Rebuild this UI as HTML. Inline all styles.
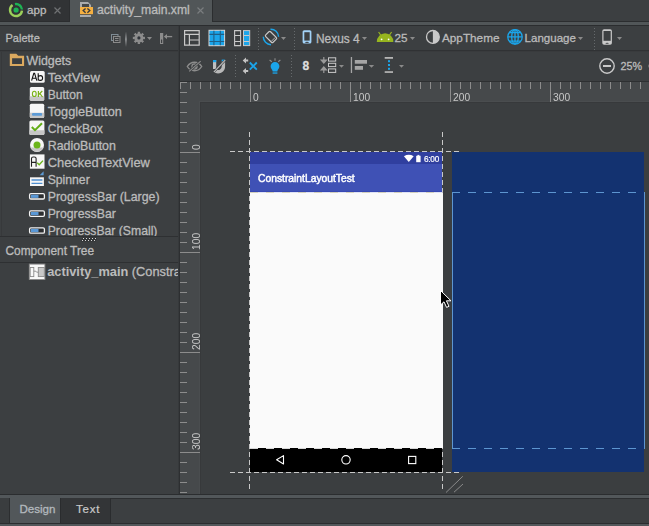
<!DOCTYPE html><html><head><meta charset="utf-8"><style>
*{margin:0;padding:0;box-sizing:border-box}
html,body{width:649px;height:526px;overflow:hidden;background:#3c3f41;font-family:"Liberation Sans",sans-serif;color:#bbbbbb}
.a{position:absolute}
.t{position:absolute;white-space:nowrap;line-height:1;-webkit-text-stroke:0.3px currentColor}
svg{position:absolute;overflow:visible}
</style></head><body><div class="a" style="left:0px;top:0px;width:649px;height:22px;background:#3c3f41;"></div>
<div class="a" style="left:0px;top:0px;width:70px;height:22px;background:#313335;"></div>
<div class="a" style="left:69px;top:0px;width:1px;height:22px;background:#2b2d2f;"></div>
<div class="a" style="left:70px;top:0px;width:142px;height:25px;background:#515658;"></div>
<div class="a" style="left:212px;top:0px;width:1px;height:22px;background:#2b2d2f;"></div>
<div class="a" style="left:213px;top:21px;width:436px;height:1px;background:#2b2d2f;"></div>
<div class="a" style="left:0px;top:21px;width:69px;height:1px;background:#2b2d2f;"></div>
<div class="a" style="left:0px;top:22px;width:649px;height:3px;background:#515658;"></div>
<div class="a" style="left:0px;top:25px;width:649px;height:1px;background:#2b2d2f;"></div>
<div class="a" style="left:178px;top:26px;width:1px;height:468px;background:#36393b;"></div>
<div class="a" style="left:179px;top:26px;width:1px;height:468px;background:#2d2f31;"></div>
<div class="a" style="left:0px;top:50px;width:178px;height:1px;background:#303234;"></div>
<div class="a" style="left:0px;top:51px;width:178px;height:1px;background:#393b3d;"></div>
<div class="a" style="left:0px;top:236px;width:178px;height:1px;background:#2e3032;"></div>
<div class="a" style="left:1px;top:52px;width:1px;height:184px;background:#37393b;"></div>
<div class="a" style="left:0px;top:262px;width:178px;height:1px;background:#2e3032;"></div>
<div class="a" style="left:180px;top:50px;width:469px;height:1px;background:#303234;"></div>
<div class="a" style="left:180px;top:51px;width:469px;height:1px;background:#393b3d;"></div>
<div class="a" style="left:179px;top:81px;width:470px;height:1px;background:#2e3032;"></div>
<div class="a" style="left:180px;top:82px;width:469px;height:20px;background:#46494b;"></div>
<div class="a" style="left:180px;top:102px;width:20px;height:392px;background:#46494b;"></div>
<div class="a" style="left:200px;top:102px;width:449px;height:392px;background:#3b3e40;"></div>
<div class="a" style="left:199px;top:101px;width:1px;height:393px;background:#4a4d4f;"></div>
<div class="a" style="left:199px;top:101px;width:450px;height:1px;background:#4a4d4f;"></div>
<div class="a" style="left:200px;top:102px;width:1px;height:392px;background:#37393b;"></div>
<div class="a" style="left:200px;top:102px;width:449px;height:1px;background:#37393b;"></div>
<div class="a" style="left:180px;top:82px;width:469px;height:7px;background:repeating-linear-gradient(to right,#8c8c8c 0 1px,transparent 1px 10px)"></div>
<div class="a" style="left:180px;top:82px;width:7px;height:412px;background:repeating-linear-gradient(to bottom,#8c8c8c 0 1px,transparent 1px 10px)"></div>
<div class="a" style="left:250px;top:82px;width:1px;height:20px;background:#8c8c8c;"></div>
<div class="t" style="left:253px;top:93px;font-size:10.2px;color:#c8c8c8;font-weight:normal;-webkit-text-stroke:0;letter-spacing:0.1px;will-change:transform">0</div>
<div class="a" style="left:350px;top:82px;width:1px;height:20px;background:#8c8c8c;"></div>
<div class="t" style="left:353px;top:93px;font-size:10.2px;color:#c8c8c8;font-weight:normal;-webkit-text-stroke:0;letter-spacing:0.1px;will-change:transform">100</div>
<div class="a" style="left:450px;top:82px;width:1px;height:20px;background:#8c8c8c;"></div>
<div class="t" style="left:453px;top:93px;font-size:10.2px;color:#c8c8c8;font-weight:normal;-webkit-text-stroke:0;letter-spacing:0.1px;will-change:transform">200</div>
<div class="a" style="left:550px;top:82px;width:1px;height:20px;background:#8c8c8c;"></div>
<div class="t" style="left:553px;top:93px;font-size:10.2px;color:#c8c8c8;font-weight:normal;-webkit-text-stroke:0;letter-spacing:0.1px;will-change:transform">300</div>
<div class="a" style="left:180px;top:152px;width:20px;height:1px;background:#8c8c8c;"></div>
<div class="t" style="left:192px;top:150px;font-size:10.2px;color:#c8c8c8;-webkit-text-stroke:0;letter-spacing:0.1px;transform:rotate(-90deg);transform-origin:0 0;will-change:transform">0</div>
<div class="a" style="left:180px;top:252px;width:20px;height:1px;background:#8c8c8c;"></div>
<div class="t" style="left:192px;top:250px;font-size:10.2px;color:#c8c8c8;-webkit-text-stroke:0;letter-spacing:0.1px;transform:rotate(-90deg);transform-origin:0 0;will-change:transform">100</div>
<div class="a" style="left:180px;top:352px;width:20px;height:1px;background:#8c8c8c;"></div>
<div class="t" style="left:192px;top:350px;font-size:10.2px;color:#c8c8c8;-webkit-text-stroke:0;letter-spacing:0.1px;transform:rotate(-90deg);transform-origin:0 0;will-change:transform">200</div>
<div class="a" style="left:180px;top:452px;width:20px;height:1px;background:#8c8c8c;"></div>
<div class="t" style="left:192px;top:450px;font-size:10.2px;color:#c8c8c8;-webkit-text-stroke:0;letter-spacing:0.1px;transform:rotate(-90deg);transform-origin:0 0;will-change:transform">300</div>
<div class="a" style="left:0px;top:494px;width:649px;height:1px;background:#2b2d2f;"></div>
<div class="a" style="left:0px;top:495px;width:649px;height:3px;background:#52575a;"></div>
<div class="a" style="left:0px;top:498px;width:649px;height:25px;background:#3c3f41;"></div>
<div class="a" style="left:0px;top:498px;width:649px;height:1px;background:#2c2e30;"></div>
<div class="a" style="left:0px;top:498px;width:10px;height:25px;background:#3a3d3f;"></div>
<div class="a" style="left:9px;top:498px;width:1px;height:25px;background:#2c2e30;"></div>
<div class="a" style="left:10px;top:495px;width:50px;height:28px;background:#52575a;"></div>
<div class="a" style="left:60px;top:498px;width:51px;height:25px;background:#333537;"></div>
<div class="a" style="left:60px;top:498px;width:1px;height:25px;background:#2a2c2e;"></div>
<div class="a" style="left:110px;top:498px;width:1px;height:25px;background:#2a2c2e;"></div>
<div class="a" style="left:0px;top:523px;width:649px;height:1px;background:#2b2d2f;"></div>
<div class="a" style="left:0px;top:524px;width:649px;height:2px;background:#52575a;"></div>
<div class="a" style="left:250px;top:152px;width:193px;height:320px;background:#fafafa;"></div>
<div class="a" style="left:250px;top:152px;width:192px;height:12px;background:#303f9f;"></div>
<div class="a" style="left:250px;top:164px;width:192px;height:28px;background:#3f51b5;"></div>
<div class="a" style="left:250px;top:191px;width:192px;height:1px;background:#3748b3;"></div>
<div class="a" style="left:250px;top:192px;width:193px;height:1px;background:#dfe2f3;"></div>
<div class="a" style="left:250px;top:448px;width:192px;height:24px;background:#000000;"></div>
<div class="a" style="left:442px;top:152px;width:1px;height:40px;background:#3c3f41;"></div>
<div class="a" style="left:442px;top:448px;width:1px;height:24px;background:#3c3f41;"></div>
<div class="a" style="left:452px;top:152px;width:192px;height:320px;background:#133270;"></div>
<div class="a" style="left:230px;top:151px;width:232px;height:1px;background:repeating-linear-gradient(to right,#c8c8c8 0 5px,transparent 5px 8px)"></div>
<div class="a" style="left:230px;top:472px;width:232px;height:1px;background:repeating-linear-gradient(to right,#c8c8c8 0 5px,transparent 5px 8px)"></div>
<div class="a" style="left:249px;top:132px;width:1px;height:360px;background:repeating-linear-gradient(to bottom,#c8c8c8 0 5px,transparent 5px 8px)"></div>
<div class="a" style="left:442px;top:132px;width:1px;height:360px;background:repeating-linear-gradient(to bottom,#c8c8c8 0 5px,transparent 5px 8px)"></div>
<div class="a" style="left:442px;top:193px;width:1px;height:255px;background:#fafafa;"></div>
<div class="t" style="left:27px;top:4px;font-size:11.6px;color:#bbbbbb;font-weight:normal;">app</div>
<div class="t" style="left:97px;top:4px;font-size:12.2px;color:#bbbbbb;font-weight:normal;">activity_main.xml</div>
<div class="t" style="left:5.5px;top:33px;font-size:11px;color:#bbbbbb;font-weight:normal;">Palette</div>
<div class="t" style="left:26.5px;top:55px;font-size:12.4px;color:#bbbbbb;font-weight:normal;">Widgets</div>
<div class="a" style="left:0;top:51px;width:178px;height:185px;overflow:hidden">
<div class="t" style="left:47.7px;top:20px;font-size:13.1px;color:#bbbbbb;font-weight:normal;">TextView</div>
<div class="t" style="left:47.7px;top:38px;font-size:12.1px;color:#bbbbbb;font-weight:normal;">Button</div>
<div class="t" style="left:47.7px;top:55px;font-size:12.7px;color:#bbbbbb;font-weight:normal;">ToggleButton</div>
<div class="t" style="left:47.7px;top:72px;font-size:12.1px;color:#bbbbbb;font-weight:normal;">CheckBox</div>
<div class="t" style="left:47.7px;top:89px;font-size:12.4px;color:#bbbbbb;font-weight:normal;">RadioButton</div>
<div class="t" style="left:47.7px;top:106px;font-size:12.9px;color:#bbbbbb;font-weight:normal;">CheckedTextView</div>
<div class="t" style="left:47.7px;top:123px;font-size:12.2px;color:#bbbbbb;font-weight:normal;">Spinner</div>
<div class="t" style="left:47.7px;top:140px;font-size:12.35px;color:#bbbbbb;font-weight:normal;">ProgressBar (Large)</div>
<div class="t" style="left:47.7px;top:157px;font-size:12.25px;color:#bbbbbb;font-weight:normal;">ProgressBar</div>
<div class="t" style="left:47.7px;top:174px;font-size:12.2px;color:#bbbbbb;font-weight:normal;">ProgressBar (Small)</div>
</div>
<div class="t" style="left:5.5px;top:246px;font-size:11.9px;color:#bbbbbb;font-weight:normal;">Component Tree</div>
<div class="a" style="left:0;top:263px;width:178px;height:30px;overflow:hidden">
<div class="t" style="left:47.2px;top:3px;font-size:12.8px;color:#bbbbbb;font-weight:bold;-webkit-text-stroke:0.05px currentColor">activity_main <span style="font-weight:normal;-webkit-text-stroke:0.3px currentColor">(ConstraintLayout)</span></div>
</div>
<div class="t" style="left:316px;top:34px;font-size:11.9px;color:#bbbbbb;font-weight:normal;">Nexus 4</div>
<div class="t" style="left:394.5px;top:32px;font-size:11.7px;color:#bbbbbb;font-weight:normal;">25</div>
<div class="t" style="left:442px;top:32px;font-size:11.75px;color:#bbbbbb;font-weight:normal;">AppTheme</div>
<div class="t" style="left:524.6px;top:33px;font-size:11.55px;color:#bbbbbb;font-weight:normal;">Language</div>
<div class="t" style="left:302.6px;top:60px;font-size:12px;color:#dddddd;font-weight:bold;">8</div>
<div class="t" style="left:620.4px;top:61px;font-size:10.8px;color:#bbbbbb;font-weight:normal;">25%</div>
<div class="t" style="left:19.4px;top:503px;font-size:11.6px;color:#b2b8bd;font-weight:normal;">Design</div>
<div class="t" style="left:76px;top:504px;font-size:11.5px;color:#c9c9c9;font-weight:normal;letter-spacing:0.75px;-webkit-text-stroke:0.2px currentColor">Text</div>
<div class="t" style="left:258.3px;top:174px;font-size:10.3px;color:#ffffff;font-weight:normal;-webkit-text-stroke:0.45px #fff;will-change:transform">ConstraintLayoutTest</div>
<div class="t" style="left:423.6px;top:156px;font-size:8.2px;color:#ffffff;font-weight:normal;-webkit-text-stroke:0.2px #fff;letter-spacing:-0.25px;will-change:transform">6:00</div>
<svg class="a" style="left:0;top:0" width="649" height="526" viewBox="0 0 649 526"><path d="M14.96 4.09A6 6 0 0 1 21.98 9.48" stroke="#1db354" stroke-width="2.4" fill="none"/><path d="M21.98 10.52A6 6 0 1 1 12.56 5.08" stroke="#9bd05a" stroke-width="2.4" fill="none"/><circle cx="16.1" cy="10" r="2.6" fill="#1db354"/><path d="M54.5 7.5L60.5 13.5M60.5 7.5L54.5 13.5" stroke="#6f7173" stroke-width="1.2"/><path d="M197.5 7.5L203.5 13.5M203.5 7.5L197.5 13.5" stroke="#7a7d7f" stroke-width="1.2"/><path d="M80 2H88L91 5V7H89V5.5L87.6 4H82V7H80Z" fill="#a9abad"/><rect x="80" y="15" width="11" height="2" fill="#a9abad"/><rect x="82" y="4" width="7" height="3" fill="#45484a"/><rect x="80" y="14.2" width="11" height="0.8" fill="#45484a"/><rect x="80" y="7" width="13" height="7.2" fill="#f5b041"/><path d="M85.6 8.4L83.2 10.6L85.6 12.8M87.4 8.4L89.8 10.6L87.4 12.8" stroke="#3a3c3e" stroke-width="1.4" fill="none"/><rect x="111.5" y="34.5" width="6.5" height="6" fill="none" stroke="#7e8b94" stroke-width="1"/><rect x="113.5" y="36.5" width="6.5" height="6" fill="#3c3f41" stroke="#8a8a8a" stroke-width="1"/><path d="M115 38.5H118.5M115 40.5H118.5" stroke="#8a8a8a" stroke-width="1"/><defs><linearGradient id="sep" x1="0" y1="0" x2="0" y2="1"><stop offset="0" stop-color="#3c3f41"/><stop offset="0.5" stop-color="#a0a3a5"/><stop offset="1" stop-color="#3c3f41"/></linearGradient></defs><rect x="125.2" y="31.5" width="1.5" height="15.5" fill="url(#sep)"/><path d="M142.80 37.00L144.97 36.63L144.97 39.17L142.80 38.80ZM142.29 40.02L144.09 41.29L142.29 43.09L141.02 41.29ZM139.80 41.80L140.17 43.97L137.63 43.97L138.00 41.80ZM136.78 41.29L135.51 43.09L133.71 41.29L135.51 40.02ZM135.00 38.80L132.83 39.17L132.83 36.63L135.00 37.00ZM135.51 35.78L133.71 34.51L135.51 32.71L136.78 34.51ZM138.00 34.00L137.63 31.83L140.17 31.83L139.80 34.00ZM141.02 34.51L142.29 32.71L144.09 34.51L142.29 35.78Z" fill="#8c8c8c"/><circle cx="138.9" cy="37.9" r="4.6" fill="#8c8c8c"/><circle cx="138.9" cy="37.9" r="1.6" fill="#30343a"/><path d="M147 37H152L149.5 40Z" fill="#8a8a8a"/><rect x="160" y="33" width="3.2" height="11" fill="#8c8c8c"/><rect x="161" y="39.5" width="1.2" height="3.5" fill="#3c3f41"/><path d="M164.5 36.6H172.2" stroke="#8c8c8c" stroke-width="1.3"/><path d="M164 36.6L167 34V39.2Z" fill="#8c8c8c"/><path d="M184.6 30.6H199.2V45.2H184.6ZM184.6 34.4H199.2M189.4 34.4V45.2M189.4 40H199.2" fill="none" stroke="#c9c9c9" stroke-width="1.2"/><rect x="209" y="30.3" width="15.6" height="15.4" fill="#1ba5ea" stroke="#d8d8d8" stroke-width="1"/><path d="M209.5 34.4H224.2M209.5 41.5H224.2M213.9 30.8V45.2M220.3 30.8V45.2" stroke="#1f5f86" stroke-width="1.1"/><path d="M234.6 30.6H240.6V45.6H234.6ZM234.6 35.5H240.6M234.6 41.5H240.6" fill="none" stroke="#c9c9c9" stroke-width="1.1"/><rect x="243.5" y="30.6" width="6.2" height="15" fill="#1ba5ea" stroke="#c9c9c9" stroke-width="1"/><path d="M244 35.5H249.2M244 41.5H249.2" stroke="#c9c9c9" stroke-width="1"/><rect x="258" y="28" width="1" height="1" fill="#666a6c"/><rect x="258" y="31" width="1" height="1" fill="#666a6c"/><rect x="258" y="34" width="1" height="1" fill="#666a6c"/><rect x="258" y="37" width="1" height="1" fill="#666a6c"/><rect x="258" y="40" width="1" height="1" fill="#666a6c"/><rect x="258" y="43" width="1" height="1" fill="#666a6c"/><rect x="258" y="46" width="1" height="1" fill="#666a6c"/><rect x="258" y="49" width="1" height="1" fill="#666a6c"/><g transform="rotate(-45 271 37)"><rect x="267.6" y="31.8" width="6.8" height="10.4" rx="1.2" fill="none" stroke="#c9c9c9" stroke-width="1.2"/><path d="M268.2 40.3H273.8" stroke="#c9c9c9" stroke-width="0.8"/></g><path d="M270.5 29.2A7.8 7.8 0 0 1 278.6 36.8" stroke="#1ba5ea" stroke-width="1.4" fill="none"/><path d="M263.3 36.8A7.8 7.8 0 0 0 271 44.7" stroke="#1ba5ea" stroke-width="1.4" fill="none"/><path d="M281 37H286L283.5 40Z" fill="#8a8a8a"/><rect x="294" y="28" width="1" height="1" fill="#666a6c"/><rect x="294" y="31" width="1" height="1" fill="#666a6c"/><rect x="294" y="34" width="1" height="1" fill="#666a6c"/><rect x="294" y="37" width="1" height="1" fill="#666a6c"/><rect x="294" y="40" width="1" height="1" fill="#666a6c"/><rect x="294" y="43" width="1" height="1" fill="#666a6c"/><rect x="294" y="46" width="1" height="1" fill="#666a6c"/><rect x="294" y="49" width="1" height="1" fill="#666a6c"/><rect x="302.6" y="30.2" width="8.8" height="13.4" rx="1.6" fill="#a2d2f7"/><rect x="304.3" y="32.2" width="5.4" height="8.4" fill="#3c3f41"/><ellipse cx="307" cy="42.3" rx="2" ry="0.6" fill="#3c3f41"/><path d="M362 37H367L364.5 40Z" fill="#8a8a8a"/><path d="M376.8 42A8.3 8.8 0 0 1 393.4 42Z" fill="#97b51f"/><path d="M378.6 32L381 35.5M391.6 32L389.2 35.5" stroke="#97b51f" stroke-width="1.2"/><circle cx="381.6" cy="39.3" r="0.9" fill="#ffffff"/><circle cx="388.6" cy="39.3" r="0.9" fill="#ffffff"/><path d="M410 37H415L412.5 40Z" fill="#8a8a8a"/><circle cx="432.9" cy="36.9" r="6.4" fill="none" stroke="#c9c9c9" stroke-width="1.3"/><path d="M432.9 30.5A6.4 6.4 0 0 1 432.9 43.3Z" fill="#c9c9c9"/><g fill="none" stroke="#1ba5ea" stroke-width="1.3"><circle cx="515" cy="36.9" r="7.2"/><ellipse cx="515" cy="36.9" rx="3.3" ry="7.2"/><path d="M515 29.7V44.1M507.8 36.9H522.2M509 32.6H521M509 41.2H521"/></g><path d="M578 37H583L580.5 40Z" fill="#8a8a8a"/><rect x="594" y="28" width="1" height="1" fill="#666a6c"/><rect x="594" y="31" width="1" height="1" fill="#666a6c"/><rect x="594" y="34" width="1" height="1" fill="#666a6c"/><rect x="594" y="37" width="1" height="1" fill="#666a6c"/><rect x="594" y="40" width="1" height="1" fill="#666a6c"/><rect x="594" y="43" width="1" height="1" fill="#666a6c"/><rect x="594" y="46" width="1" height="1" fill="#666a6c"/><rect x="594" y="49" width="1" height="1" fill="#666a6c"/><rect x="602.3" y="29.3" width="9.6" height="15.5" rx="1.8" fill="#c9c9c9"/><rect x="603.5" y="31" width="7.2" height="9.8" fill="#3c3f41"/><ellipse cx="607.1" cy="43.2" rx="1.6" ry="0.5" fill="#3c3f41"/><path d="M617 37H622L619.5 40Z" fill="#8a8a8a"/><path d="M187.3 66.5C189.5 63 192 62.2 194.5 62.2C197 62.2 199.5 63 201.7 66.5C199.5 70 197 70.8 194.5 70.8C192 70.8 189.5 70 187.3 66.5Z" fill="none" stroke="#8c8c8c" stroke-width="1.4"/><circle cx="194.5" cy="66.5" r="2.6" fill="none" stroke="#8c8c8c" stroke-width="1.2"/><path d="M194.5 63.9A2.6 2.6 0 0 1 194.5 69.1Z" fill="#8c8c8c"/><path d="M189.2 71.4L200.7 61.1" stroke="#3c3f41" stroke-width="2.4"/><path d="M189.2 71.4L200.7 61.1" stroke="#8c8c8c" stroke-width="1.1"/><rect x="213" y="60" width="3.2" height="9" fill="#c0c0c0"/><rect x="213" y="60" width="3.2" height="2.2" fill="#1ba5ea"/><path d="M223.4 61.5V66A5.2 5.2 0 0 1 214.6 70.2" stroke="#b8b8b8" stroke-width="3.4" fill="none"/><rect x="221.7" y="59.6" width="3.4" height="1.6" fill="#1ba5ea"/><path d="M214 71.8L225.2 60.2" stroke="#3c3f41" stroke-width="2.2"/><path d="M214 71.8L225.2 60.2" stroke="#c0c0c0" stroke-width="1.1"/><rect x="235" y="55" width="1" height="1" fill="#666a6c"/><rect x="235" y="58" width="1" height="1" fill="#666a6c"/><rect x="235" y="61" width="1" height="1" fill="#666a6c"/><rect x="235" y="64" width="1" height="1" fill="#666a6c"/><rect x="235" y="67" width="1" height="1" fill="#666a6c"/><rect x="235" y="70" width="1" height="1" fill="#666a6c"/><rect x="235" y="73" width="1" height="1" fill="#666a6c"/><rect x="235" y="76" width="1" height="1" fill="#666a6c"/><path d="M242.7 60.6L246 57.6V59.6H248.2V61.6H246V63.6Z" fill="#c4c4c4"/><path d="M242.7 71L246 68V70H248.2V72H246V74Z" fill="#c4c4c4"/><path d="M249.8 62.5L256.8 69.7M256.8 62.5L249.8 69.7" stroke="#1ba5ea" stroke-width="1.8"/><path d="M270.6 66.3A4.4 4.4 0 1 1 279.4 66.3C279.4 68.6 277.6 69.6 277.3 71.4H272.7C272.4 69.6 270.6 68.6 270.6 66.3Z" fill="#1ba5ea"/><rect x="272.6" y="72.4" width="4.8" height="1.3" fill="#1ba5ea"/><path d="M275 58.2V60.8M269.6 60L271.8 61.8M280.4 60L278.2 61.8" stroke="#8c8c8c" stroke-width="1.1"/><rect x="291" y="55" width="1" height="1" fill="#666a6c"/><rect x="291" y="58" width="1" height="1" fill="#666a6c"/><rect x="291" y="61" width="1" height="1" fill="#666a6c"/><rect x="291" y="64" width="1" height="1" fill="#666a6c"/><rect x="291" y="67" width="1" height="1" fill="#666a6c"/><rect x="291" y="70" width="1" height="1" fill="#666a6c"/><rect x="291" y="73" width="1" height="1" fill="#666a6c"/><rect x="291" y="76" width="1" height="1" fill="#666a6c"/><path d="M323.8 57V61M321.2 60L323.8 63L326.4 60Z" stroke="#9a9a9a" stroke-width="1.2" fill="#9a9a9a"/><path d="M323.8 73V69M321.2 70L323.8 67L326.4 70Z" stroke="#9a9a9a" stroke-width="1.2" fill="#9a9a9a"/><g fill="none" stroke="#c9c9c9" stroke-width="1"><rect x="328.5" y="57.8" width="7.2" height="3.3"/><rect x="328.5" y="63.3" width="7.2" height="3.3"/><rect x="328.5" y="68.9" width="7.2" height="3.5"/></g><path d="M339 65H344L341.5 67.8Z" fill="#8a8a8a"/><rect x="350.8" y="57" width="1.3" height="16" fill="#a5a5a5"/><rect x="354.8" y="60" width="12.2" height="3.7" fill="#a5a5a5"/><rect x="354.8" y="66" width="8.2" height="3.8" fill="#a5a5a5"/><path d="M368.8 65H374.2L371.5 67.8Z" fill="#8a8a8a"/><rect x="384.7" y="57" width="8.3" height="1.8" fill="#b5b5b5"/><rect x="384.7" y="71.2" width="8.3" height="1.7" fill="#b5b5b5"/><rect x="388" y="60.2" width="2" height="2" fill="#1ba5ea"/><rect x="388" y="64" width="2" height="2" fill="#1ba5ea"/><rect x="388" y="67.8" width="2" height="2" fill="#1ba5ea"/><path d="M399 65H404L401.5 67.8Z" fill="#8a8a8a"/><circle cx="607" cy="66" r="7.2" fill="none" stroke="#c9c9c9" stroke-width="1.4"/><rect x="603" y="65" width="8" height="2" fill="#c9c9c9"/><path d="M9.8 53.8H16.3L18.2 55.7H24.1V66H9.8ZM12.1 58.2V63.9H22V58.2Z" fill="#dba95f" fill-rule="evenodd"/><rect x="30" y="71" width="14.7" height="11.8" rx="1.5" fill="#f6f6f6"/><path d="M31.6 80.6L33.8 73.4H34.6L36.8 80.6M32.4 78.2H36" stroke="#111" stroke-width="1.1" fill="none"/><path d="M38.2 73.2V80.4M38.2 76.8Q38.8 75.6 40.5 75.6Q42.6 75.6 42.6 78Q42.6 80.4 40.5 80.4Q38.8 80.4 38.2 79.2" stroke="#111" stroke-width="1.1" fill="none"/><rect x="29.8" y="87.1" width="14.4" height="13.7" rx="1.5" fill="#f6f6f6"/><path d="M29.8 96.3H44.2V99.3A1.5 1.5 0 0 1 42.7 100.8H31.3A1.5 1.5 0 0 1 29.8 99.3Z" fill="#c6c6c6"/><ellipse cx="34.3" cy="93.9" rx="1.9" ry="2.6" stroke="#7ab317" stroke-width="1.1" fill="none"/><path d="M38.4 91V97M42.3 91L38.6 94.6M39.8 93.4L42.5 97" stroke="#7ab317" stroke-width="1.2" fill="none"/><rect x="29.8" y="103.8" width="14.4" height="14.1" rx="1.5" fill="#f6f6f6"/><path d="M29.8 112.7H44.2V116.4A1.5 1.5 0 0 1 42.7 117.9H31.3A1.5 1.5 0 0 1 29.8 116.4Z" fill="#c6c6c6"/><rect x="32" y="113.1" width="10.1" height="2.7" rx="1" fill="#5c9bd6"/><rect x="29.4" y="120.6" width="15" height="14.3" rx="1.5" fill="#f6f6f6"/><path d="M29.4 130.3H44.4V133.4A1.5 1.5 0 0 1 42.9 134.9H30.9A1.5 1.5 0 0 1 29.4 133.4Z" fill="#c6c6c6"/><path d="M31.8 127L35 130.2L42 123.2" stroke="#62ad17" stroke-width="2" fill="none"/><circle cx="37" cy="145" r="7" fill="#f6f6f6"/><path d="M30.6 147.5A7 7 0 0 0 43.4 147.5Z" fill="#c6c6c6"/><circle cx="37" cy="145" r="3.5" fill="#6bb51a"/><rect x="29.9" y="154.4" width="14.6" height="14.3" fill="#f6f6f6"/><path d="M31.5 166.8V158.6Q31.5 157 33.2 157H34.4Q36.1 157 36.1 158.6V166.8M31.5 162.4H36.1" stroke="#222" stroke-width="1.1" fill="none"/><path d="M37.2 162.8L39.2 164.8L43 160.6" stroke="#6bb51a" stroke-width="1.4" fill="none"/><path d="M39.6 175.3L43.6 171.3V175.3Z" fill="#5c9bd6"/><rect x="30" y="177.3" width="13.9" height="8.7" fill="#f6f6f6"/><path d="M31.5 180H42.4M31.5 183.4H42.4" stroke="#4f8fd0" stroke-width="1.4"/><rect x="29.6" y="193.6" width="14.8" height="5.4" rx="1.3" fill="#2b2d2f" stroke="#f4f4f4" stroke-width="1.3"/><rect x="30.9" y="194.7" width="7.6" height="3.2" fill="#5a98d6"/><rect x="29.6" y="210.9" width="14.8" height="5.4" rx="1.3" fill="#2b2d2f" stroke="#f4f4f4" stroke-width="1.3"/><rect x="30.9" y="212.0" width="7.6" height="3.2" fill="#5a98d6"/><rect x="29.6" y="227.79999999999998" width="14.8" height="5.4" rx="1.3" fill="#2b2d2f" stroke="#f4f4f4" stroke-width="1.3"/><rect x="30.9" y="228.89999999999998" width="7.6" height="3.2" fill="#5a98d6"/><rect x="82.5" y="237.5" width="2" height="2" fill="#2a2c2e"/><rect x="83" y="238" width="1" height="1" fill="#d8d8d8"/><rect x="85.5" y="237.5" width="2" height="2" fill="#2a2c2e"/><rect x="86" y="238" width="1" height="1" fill="#d8d8d8"/><rect x="88.5" y="237.5" width="2" height="2" fill="#2a2c2e"/><rect x="89" y="238" width="1" height="1" fill="#d8d8d8"/><rect x="91.5" y="237.5" width="2" height="2" fill="#2a2c2e"/><rect x="92" y="238" width="1" height="1" fill="#d8d8d8"/><rect x="94.5" y="237.5" width="2" height="2" fill="#2a2c2e"/><rect x="95" y="238" width="1" height="1" fill="#d8d8d8"/><rect x="81.5" y="239.5" width="2" height="2" fill="#2a2c2e"/><rect x="82" y="240" width="1" height="1" fill="#d8d8d8"/><rect x="84.5" y="239.5" width="2" height="2" fill="#2a2c2e"/><rect x="85" y="240" width="1" height="1" fill="#d8d8d8"/><rect x="87.5" y="239.5" width="2" height="2" fill="#2a2c2e"/><rect x="88" y="240" width="1" height="1" fill="#d8d8d8"/><rect x="90.5" y="239.5" width="2" height="2" fill="#2a2c2e"/><rect x="91" y="240" width="1" height="1" fill="#d8d8d8"/><rect x="93.5" y="239.5" width="2" height="2" fill="#2a2c2e"/><rect x="94" y="240" width="1" height="1" fill="#d8d8d8"/><rect x="29.3" y="264.1" width="15.6" height="15.4" fill="#f8f8f8" stroke="#8a8a8a" stroke-width="0.9"/><rect x="30.2" y="267.5" width="3.6" height="9.1" fill="#f8f8f8" stroke="#8a8a8a" stroke-width="0.9"/><rect x="38.3" y="267.5" width="6" height="9.1" fill="#c8c8c8" stroke="#8a8a8a" stroke-width="0.9"/><path d="M33.8 271.2H35.8L36.6 272.2H38.3" stroke="#8a8a8a" stroke-width="0.9" fill="none"/><path d="M403.9 156.2Q408.8 153.4 413.7 156.2L408.8 162Z" fill="#ffffff"/><rect x="416.2" y="155.8" width="4.4" height="6.4" fill="#ffffff"/><rect x="417.4" y="154.9" width="2" height="1" fill="#ffffff"/><path d="M283.5 455.6V464L276.6 459.8Z" fill="none" stroke="#ffffff" stroke-width="1.1" stroke-linejoin="round"/><circle cx="346" cy="459.8" r="4.2" fill="none" stroke="#ffffff" stroke-width="1.1"/><rect x="408.6" y="456.4" width="7.2" height="7.2" fill="none" stroke="#ffffff" stroke-width="1.1"/><path d="M452.5 192V449M644.5 192V449" stroke="#5d95d0" stroke-width="1"/><path d="M452 192.5H645M452 448.5H645" stroke="#5d95d0" stroke-width="1" stroke-dasharray="8 8"/><path d="M250 192.5H442" stroke="#d3d0be" stroke-width="1" stroke-dasharray="8 8"/><path d="M250 448.5H442" stroke="#d6d6d6" stroke-width="1" stroke-dasharray="8 8"/><path d="M446 492.5L462.8 476.3M454 492.2L463 484" stroke="#8a8a8a" stroke-width="1"/><path d="M440.5 290.5V305L444 301.8L446.6 307.4L449 306.3L446.4 300.8H451Z" fill="#000" stroke="#fff" stroke-width="1" stroke-linejoin="round"/><circle cx="656.5" cy="66" r="7.2" fill="none" stroke="#c9c9c9" stroke-width="1.4"/></svg></body></html>
